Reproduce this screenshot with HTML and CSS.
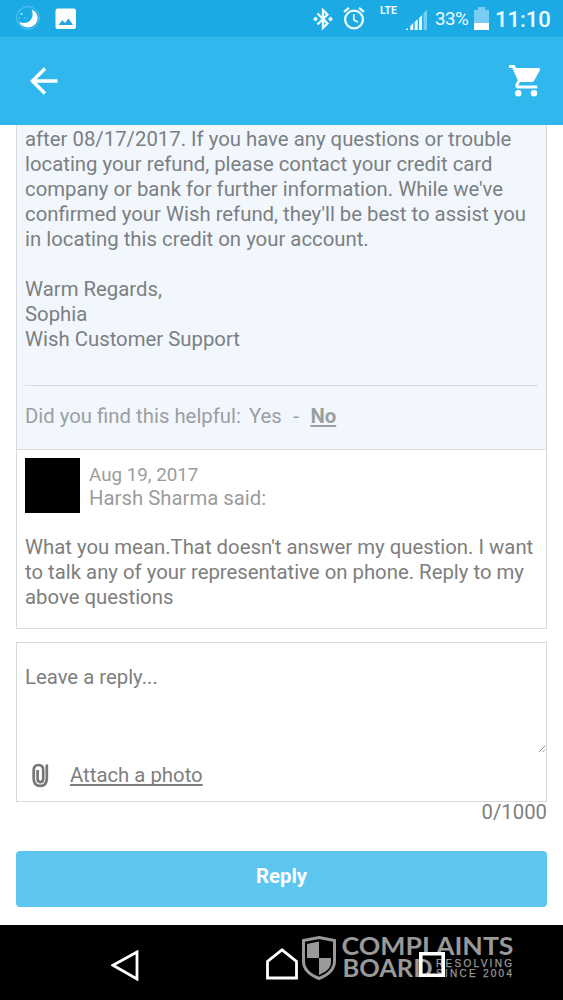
FILE: index.html
```html
<!DOCTYPE html>
<html lang="en">
<head>
<meta charset="utf-8">
<title>Support conversation</title>
<link rel="stylesheet" href="styles.css">
</head>
<body>
<div class="phone">
  <div class="status">
    <svg class="moon" width="24" height="26" viewBox="0 0 24 26"><circle cx="12" cy="13" r="11.4" fill="none" stroke="#65c6f0" stroke-width=".9"/><path d="M15.500 4.500C22.500 7 23.500 15.500 18.500 20C14 24.200 5.500 23 3 16.800C7.500 19.300 12.500 18 15 14.500C17.300 11.300 17 7.500 15.500 4.500Z" fill="#fff"/><g fill="#d5f3ff"><circle cx="5.500" cy="9" r=".9"/><circle cx="3.500" cy="13" r=".6"/><circle cx="9" cy="13" r=".5"/></g></svg>
    <svg class="photo" width="22" height="22" viewBox="0 0 22 22"><rect x=".5" y=".5" width="20.500" height="20.500" rx="2.500" fill="#fff"/><path d="M3.500 17L7.300 12.200L10 15L13.500 10.500L18 17Z" fill="#27a5df"/></svg>
    <span class="spacer"></span>
    <svg class="bt" width="20" height="24" viewBox="0 0 20 24"><path d="M4.500 6.500L14.500 16.500L10 20.800V3.200L14.500 7.500L4.500 17.500" fill="none" stroke="#effcff" stroke-width="2.300"/><path d="M2.500 9.500L5 12L2.500 14.500L0 12ZM17.500 9.500L20 12L17.500 14.500L15 12Z" fill="#effcff"/></svg>
    <svg class="alarm" width="22" height="24" viewBox="0 0 22 24"><g fill="none" stroke="#effcff"><circle cx="11" cy="13.500" r="8.900" stroke-width="2.300"/><path d="M1 5.800L6 1.800M16 1.800L21 5.800" stroke-width="2.300"/><path d="M10.800 8V13.800L14.800 16.300" stroke-width="1.700"/></g></svg>
    <span class="lte">LTE</span>
    <svg class="signal" width="22" height="22" viewBox="0 0 22 22"><path d="M0 21V20L2 19V21ZM4.300 21V17L7.300 14V21ZM8.700 21V13L11.700 10V21ZM13 21V9L16 6V21Z" fill="#effcff"/><path d="M17.500 21V4L21 .5V21Z" fill="#78cdf2"/></svg>
    <span class="percent">33%</span>
    <svg class="battery" width="15" height="23" viewBox="0 0 15 23"><path d="M0 3H4V0H11V3H15V16H0Z" fill="#78cdf2"/><path d="M0 16H15V23H0Z" fill="#fff"/></svg>
    <span class="clock">11:10</span>
  </div>
  <header class="bar">
    <svg width="28" height="28" viewBox="0 0 28 28"><path d="M15 1.500L2.500 14L15 26.500M2 14H27.500" fill="none" stroke="#fff" stroke-width="3.500"/></svg>
    <svg width="32" height="33" viewBox="0 0 32 33"><path d="M0 0H5.500L7.200 3H29.500C31 3 31.500 4.200 30.800 5.400L25.400 15.200C24.800 16.300 24 17 22.500 17H11L9.500 19.700C9.300 20.100 9.500 20.500 10 20.500H28.200V23.500H9.200C6.800 23.500 5.600 21.100 6.700 19L8.800 15.200L3.300 3H0Z" fill="#fff"/><circle cx="9.300" cy="28.300" r="3.200" fill="#fff"/><circle cx="25" cy="28.300" r="3.200" fill="#fff"/></svg>
  </header>
  <main class="content">
    <section class="message support">
      <p class="text">after 08/17/2017. If you have any questions or trouble<br>locating your refund, please contact your credit card<br>company or bank for further information. While we've<br>confirmed your Wish refund, they'll be best to assist you<br>in locating this credit on your account.<br><br>Warm Regards,<br>Sophia<br>Wish Customer Support</p>
      <div class="helpful"><span>Did you find this helpful:</span><span class="yes">Yes</span><span class="dash">-</span><b>No</b></div>
    </section>
    <section class="message customer">
      <div class="author"><div class="avatar"></div><div class="who"><div class="date">Aug 19, 2017</div><div>Harsh Sharma said:</div></div></div>
      <p class="text">What you mean.That doesn't answer my question. I want<br>to talk any of your representative on phone. Reply to my<br>above questions</p>
    </section>
    <section class="reply">
      <div class="entry"><span>Leave a reply...</span><svg width="7" height="7" viewBox="0 0 7 7"><path d="M0 6L6 0M3.500 6L6 3.500" stroke="#777" stroke-width=".8"/></svg></div>
      <div class="attach"><svg width="17" height="25" viewBox="0 0 17 25"><g fill="none" stroke="#777"><path d="M14.800 1.500V15.500C14.800 20.300 12.300 22.900 8.300 22.900S1.700 20.300 1.700 15.500V7.500C1.700 3.800 3.500 2 6.500 2S11.200 3.800 11.200 7V15.800C11.200 18 10.200 19.200 8.400 19.200S5.600 18 5.600 15.800V7" stroke-width="2.700"/></g></svg><span>Attach a photo</span></div>
    </section>
    <div class="count">0/1000</div>
    <button class="send">Reply</button>
  </main>
  <nav class="nav">
    <svg class="brand" width="216" height="48" viewBox="0 0 216 48">
      <path d="M19 2.500L34.500 5.500V26C34.500 35 28 40 19 43.500C10 40 3.500 35 3.500 26V5.500Z" fill="#000" stroke="#999" stroke-width="3"/>
      <path d="M19 6.500V23H7V9ZM19 23H31V27C31 33 26 37 19 40Z" fill="#999"/>
      <g class="brand-name"><text x="41.500" y="20" textLength="172" lengthAdjust="spacingAndGlyphs">COMPLAINTS</text><text x="42.500" y="42.200" textLength="90" lengthAdjust="spacingAndGlyphs">BOARD</text></g>
      <g class="brand-note"><text x="136" y="31.800" textLength="76">RESOLVING</text><text x="136" y="42.300" textLength="76">SINCE 2004</text></g>
    </svg>
    <svg class="back" width="28" height="31" viewBox="0 0 28 31"><path d="M26 2V29L2 15.300Z" fill="none" stroke="#fff" stroke-width="2.800"/></svg>
    <svg class="home" width="32" height="32" viewBox="0 0 32 32"><path d="M1.500 30V13.500L16 1.800L30.500 13.500V30Z" fill="none" stroke="#fff" stroke-width="2.800"/></svg>
    <svg class="recent" width="26" height="25" viewBox="0 0 26 25"><path d="M1.800 1.800H24.200V23.200H1.800Z" fill="none" stroke="#fff" stroke-width="3.600"/></svg>
  </nav>
</div>
</body>
</html>
```
FILE: styles.css
```css
* { box-sizing: border-box; }
body { margin: 0; background: #fff; font-family: Roboto, sans-serif; }
svg { display: block; flex: none; }
p { margin: 0; }
.phone { width: 563px; height: 1000px; display: flex; flex-direction: column; overflow: hidden; }
.status { height: 37px; flex: none; background: #1caae5; color: #effcff; display: flex; align-items: flex-start; padding: 0 13px 0 16px; }
.moon { margin-top: 5px; }
.photo { margin: 8px 0 0 15px; }
.spacer { flex: 1; }
.bt { margin: 7px 10px 0 0; }
.alarm { margin: 6px 15px 0 0; }
.lte { width: 18px; margin: 5px 8px 0 0; font-size: 10.500px; line-height: 12px; font-weight: 700; }
.signal { margin: 9px 7px 0 0; }
.percent { width: 34px; margin: 8px 5px 0 0; font-size: 18.800px; line-height: 23px; letter-spacing: -.5px; }
.battery { margin: 7px 6px 0 0; }
.clock { width: 55px; margin-top: 6px; font-size: 22px; line-height: 27px; font-weight: 500; }
.bar { height: 88px; flex: none; background: #30b7ed; display: flex; align-items: center; justify-content: space-between; padding: 0 22px 0 30px; }
.content { height: 800px; flex: none; padding: 0 16px; color: #7e7e7e; font-size: 20.330px; line-height: 25px; }
.message { border: 1px solid #d9dcde; border-top: 0; padding: 0 8px; }
.text { white-space: nowrap; }
.support { height: 325px; background: #f1f7fc; padding-top: 2px; color: #7b7f82; }
.helpful { display: flex; margin-top: 33px; border-top: 1px solid #d6dde2; padding-top: 18px; color: #9b9fa2; }
.yes { margin-left: 8px; }
.dash { margin: 0 11.500px; }
.helpful b { text-decoration: underline; text-decoration-thickness: 1.500px; text-underline-offset: 2px; }
.customer { height: 179px; padding-top: 8px; }
.author { display: flex; gap: 9px; margin-bottom: 22px; color: #9b9b9b; }
.avatar { width: 55px; height: 55px; background: #000; }
.who { padding-top: 6px; line-height: 23px; }
.date { font-size: 18.800px; }
.reply { height: 160px; margin-top: 13px; border: 1px solid #d9d9d9; padding: 22px 0 0 8px; }
.entry { height: 88px; display: flex; justify-content: space-between; align-items: flex-start; }
.entry svg { align-self: flex-end; }
.attach { display: flex; align-items: center; gap: 21px; padding: 10px 0 0 7px; }
.attach span { text-decoration: underline; text-underline-offset: 2px; text-decoration-skip-ink: none; }
.count { text-align: right; margin-top: -2px; height: 51px; }
.send { display: block; width: 100%; height: 56px; border: 0; border-radius: 4px; background: #5dc6ee; color: #fff; font: 700 20.330px/25px Roboto, sans-serif; padding: 0 0 5px; }
.nav { height: 75px; flex: none; background: #000; position: relative; display: flex; padding-left: 111px; }
.nav > svg { position: relative; }
.nav > .brand { position: absolute; left: 300px; top: 10px; }
.back { margin: 25px 127px 0 0; }
.home { margin: 23px 121px 0 0; }
.recent { margin-top: 27px; }
.brand-name { font: 700 24px Lato, sans-serif; fill: #999; }
.brand-note { font: 10px "Liberation Sans", sans-serif; fill: #999; stroke: #999; stroke-width: .25px; }
```
